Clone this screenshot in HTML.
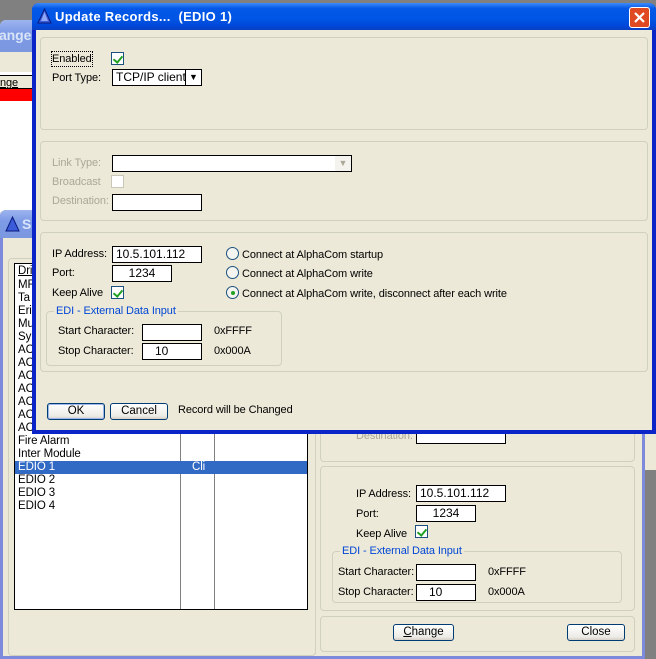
<!DOCTYPE html>
<html><head><style>
*{margin:0;padding:0;box-sizing:border-box}
body{width:656px;height:659px;overflow:hidden;background:#808080;position:relative;font-family:"Liberation Sans",sans-serif;font-size:11px;color:#000}
.a{position:absolute}
.bg{background:#ECE9D8}
.grp{position:absolute;border:1px solid #D0D0BF;border-radius:4px}
.tb{position:absolute;background:#fff;border:1px solid #000;height:17px;line-height:15px;padding-left:3px;font-size:12px;overflow:hidden;white-space:nowrap}
.lbl{position:absolute;font-size:11px;white-space:nowrap;line-height:14px;margin-top:1px;letter-spacing:-0.1px}
.dis{color:#ACA899}
.btn{position:absolute;border:1px solid #003C74;border-radius:3px;background:linear-gradient(#fff,#ECEBE6 80%,#D6D0C5);text-align:center;line-height:15px;height:17px;font-size:11.5px}
.cb{position:absolute;width:13px;height:13px;border:1px solid #1C5180;background:#fff}
.cb::after{content:"";position:absolute;left:3px;top:1px;width:4px;height:7px;border:solid #21A121;border-width:0 2px 2px 0;transform:rotate(40deg)}
.rd{position:absolute;width:13px;height:13px;border:1px solid #1C5180;border-radius:50%;background:#f4f4f0}
.blue{color:#0046D5}
</style></head><body>
<!-- window A behind -->
<div class="a" style="left:0;top:20px;width:656px;height:450px;background:#ECE9D8;border-top-left-radius:6px"></div>
<div class="a" style="left:0;top:20px;width:656px;height:32px;background:linear-gradient(#9DB4EE,#7D9AE6 40%,#7B97E0);border-top-left-radius:6px"></div>
<div class="lbl" style="left:-1px;top:27px;color:#D8E4F8;font-weight:bold;font-size:14px">ange</div>
<div class="a" style="left:0;top:72px;width:40px;height:140px;background:#fff"></div>
<div class="a" style="left:0;top:75px;width:40px;height:14px;border-top:1px solid #000;border-bottom:1px solid #000;background:#ECE9D8"></div>
<div class="lbl" style="left:0;top:75px;text-decoration:underline">nge</div>
<div class="a" style="left:0;top:89px;width:40px;height:12px;background:#f00"></div>

<!-- window B -->
<div class="a" style="left:0;top:210px;width:645px;height:449px;background:#7D89DA;border-top-left-radius:6px"></div>
<div class="a" style="left:3px;top:238px;width:639px;height:418px;background:#ECE9D8"></div>
<div class="a" style="left:0;top:210px;width:645px;height:28px;background:linear-gradient(#9DB4EE,#7D9AE6 40%,#7B97E0);border-top-left-radius:6px"></div>
<svg class="a" style="left:5px;top:216px" width="15" height="16"><polygon points="7.5,1 14,15 1,15" fill="#3B5BD8" stroke="#0A1A80"/></svg>
<div class="lbl" style="left:22px;top:216px;color:#D8E4F8;font-weight:bold;font-size:14px">S</div>
<div class="grp" style="left:8px;top:258px;width:308px;height:398px"></div>
<div class="a" style="left:14px;top:263px;width:294px;height:347px;background:#fff;border:1px solid #000"></div>
<div class="a" style="left:180px;top:264px;width:1px;height:345px;background:#808080"></div>
<div class="a" style="left:214px;top:264px;width:1px;height:345px;background:#808080"></div>
<div class="a" style="left:15px;top:461px;width:292px;height:13px;background:#316AC5"></div>
<div class="lbl" style="left:18px;top:263px;text-decoration:underline;font-size:11.5px">Dri</div>
<div class="lbl" style="left:18px;top:278px;line-height:13px;font-size:11.5px">MF<br>Ta<br>Eri<br>Mu<br>Sy<br>AC<br>AC<br>AC<br>AC<br>AC<br>AC<br>AC<br>Fire Alarm<br>Inter Module<br><span style="color:#fff">EDIO 1</span><br>EDIO 2<br>EDIO 3<br>EDIO 4</div>
<div class="lbl" style="left:192px;top:460px;line-height:13px;color:#fff;font-size:11.5px">Cli</div>
<div class="grp" style="left:320px;top:400px;width:315px;height:62px"></div>
<div class="lbl dis" style="left:356px;top:428px">Destination:</div>
<div class="tb" style="left:416px;top:427px;width:90px"></div>
<div class="grp" style="left:320px;top:466px;width:315px;height:145px"></div>
<div class="lbl" style="left:356px;top:486px">IP Address:</div>
<div class="tb" style="left:416px;top:485px;width:90px">10.5.101.112</div>
<div class="lbl" style="left:356px;top:506px">Port:</div>
<div class="tb" style="left:416px;top:505px;width:60px;text-align:center;padding:0">1234</div>
<div class="lbl" style="left:356px;top:526px">Keep Alive</div>
<div class="cb" style="left:415px;top:525px"></div>
<div class="grp" style="left:332px;top:551px;width:290px;height:52px"></div>
<div class="lbl blue bg" style="left:340px;top:543px;padding:0 2px">EDI - External Data Input</div>
<div class="lbl" style="left:338px;top:564px">Start Character:</div>
<div class="tb" style="left:416px;top:564px;width:60px"></div>
<div class="lbl" style="left:488px;top:564px">0xFFFF</div>
<div class="lbl" style="left:338px;top:584px">Stop Character:</div>
<div class="tb" style="left:416px;top:584px;width:60px;padding-left:12px">10</div>
<div class="lbl" style="left:488px;top:584px">0x000A</div>
<div class="grp" style="left:320px;top:616px;width:315px;height:36px"></div>
<div class="btn" style="left:393px;top:624px;width:61px"><u>C</u>hange</div>
<div class="btn" style="left:567px;top:624px;width:58px">Close</div>

<!-- main dialog -->
<div class="a" style="left:32px;top:3px;width:624px;height:431px;background:#0A24C8;border-radius:7px 7px 0 0"></div>
<div class="a" style="left:36px;top:30px;width:616px;height:400px;background:#ECE9D8"></div>
<div class="a" style="left:32px;top:3px;width:624px;height:27px;background:linear-gradient(#3D8BF8,#0458E8 20%,#0055E5 60%,#0047D8 85%,#0B3FC0);border-radius:7px 7px 0 0"></div>
<svg class="a" style="left:37px;top:8px" width="15" height="16"><polygon points="7.5,1 14,15 1,15" fill="#3B5BD8" stroke="#0A1A80"/><polygon points="7.5,4 11,13 4,13" fill="#8FA8F5"/></svg>
<div class="lbl" style="left:55px;top:9px;color:#fff;font-weight:bold;font-size:13px;letter-spacing:0.3px">Update Records...&nbsp;&nbsp;(EDIO 1)</div>
<div class="a" style="left:629px;top:7px;width:21px;height:21px;border:1px solid #fff;border-radius:3px;background:#E04A22"></div>
<svg class="a" style="left:629px;top:7px" width="21" height="21"><path d="M6 6L15 15M15 6L6 15" stroke="#fff" stroke-width="2.2"/></svg>

<div class="grp" style="left:40px;top:37px;width:608px;height:93px"></div>
<div class="lbl" style="left:52px;top:51px;outline:1px dotted #000">Enabled</div>
<div class="cb" style="left:111px;top:52px"></div>
<div class="lbl" style="left:52px;top:70px">Port Type:</div>
<div class="tb" style="left:112px;top:69px;width:90px">TCP/IP client</div>
<div class="a" style="left:185px;top:70px;width:16px;height:15px;border-left:1px solid #000;font-size:9px;text-align:center;line-height:15px;background:#fff">▼</div>

<div class="grp" style="left:40px;top:141px;width:608px;height:80px"></div>
<div class="lbl dis" style="left:52px;top:155px">Link Type:</div>
<div class="tb" style="left:112px;top:155px;width:240px"></div>
<div class="a" style="left:335px;top:156px;width:16px;height:15px;font-size:9px;color:#ACA899;text-align:center;line-height:15px;background:#f4f3ee">▼</div>
<div class="lbl dis" style="left:52px;top:174px">Broadcast</div>
<div class="a" style="left:111px;top:175px;width:13px;height:13px;border:1px solid #C9C7BA;background:#fff"></div>
<div class="lbl dis" style="left:52px;top:193px">Destination:</div>
<div class="tb" style="left:112px;top:194px;width:90px"></div>

<div class="grp" style="left:40px;top:232px;width:608px;height:140px"></div>
<div class="lbl" style="left:52px;top:246px">IP Address:</div>
<div class="tb" style="left:112px;top:246px;width:90px">10.5.101.112</div>
<div class="lbl" style="left:52px;top:265px">Port:</div>
<div class="tb" style="left:112px;top:265px;width:60px;text-align:center;padding:0">1234</div>
<div class="lbl" style="left:52px;top:285px">Keep Alive</div>
<div class="cb" style="left:111px;top:286px"></div>
<div class="rd" style="left:226px;top:247px"></div>
<div class="lbl" style="left:242px;top:247px">Connect at AlphaCom startup</div>
<div class="rd" style="left:226px;top:266px"></div>
<div class="lbl" style="left:242px;top:266px">Connect at AlphaCom write</div>
<div class="rd" style="left:226px;top:286px"></div>
<div class="a" style="left:231px;top:291px;width:4px;height:4px;border-radius:50%;background:#21A121"></div>
<div class="lbl" style="left:242px;top:286px">Connect at AlphaCom write, disconnect after each write</div>
<div class="grp" style="left:46px;top:311px;width:236px;height:55px"></div>
<div class="lbl blue bg" style="left:54px;top:303px;padding:0 2px">EDI - External Data Input</div>
<div class="lbl" style="left:58px;top:323px">Start Character:</div>
<div class="tb" style="left:142px;top:324px;width:60px"></div>
<div class="lbl" style="left:214px;top:323px">0xFFFF</div>
<div class="lbl" style="left:58px;top:343px">Stop Character:</div>
<div class="tb" style="left:142px;top:343px;width:60px;padding-left:12px">10</div>
<div class="lbl" style="left:214px;top:343px">0x000A</div>

<div class="btn" style="left:47px;top:403px;width:58px;box-shadow:inset 0 0 0 1px #9DB9EB">OK</div>
<div class="btn" style="left:110px;top:403px;width:58px">Cancel</div>
<div class="lbl" style="left:178px;top:402px">Record will be Changed</div>
</body></html>
